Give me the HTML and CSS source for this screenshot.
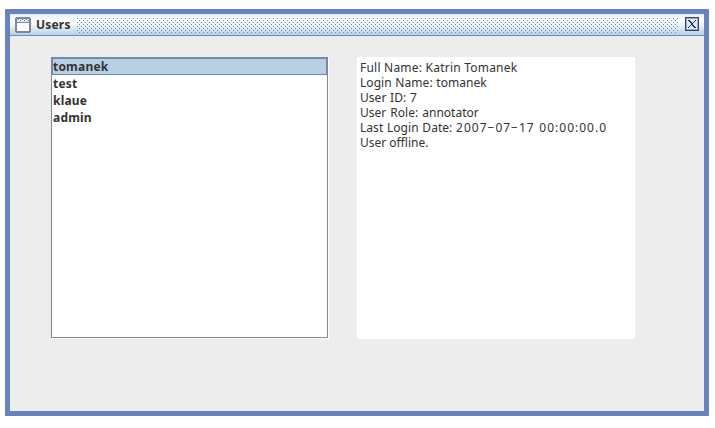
FILE: index.html
```html
<!DOCTYPE html>
<html lang="en">
<head>
<meta charset="utf-8">
<title>Users</title>
<link rel="stylesheet" href="styles.css">
</head>
<body>
<main class="window">
  <header class="titlebar">
    <svg class="icon" width="16" height="16" viewBox="0 0 16 16" shape-rendering="crispEdges">
      <rect x="1" y="1" width="14" height="14" fill="#fff"/>
      <path d="M1 0H15V1H16V15H15V16H1V15H0V1H1ZM2 2V14H14V2Z" fill="#7a8a99" fill-rule="evenodd"/>
      <rect x="2" y="2" width="12" height="3" fill="#dce8f4"/>
      <path d="M3 2h1v1h-1zM5 3h1v1h-1zM7 2h1v1h-1zM9 3h1v1h-1zM11 2h1v1h-1zM13 3h1v1h-1z" fill="#6382bf"/>
      <rect x="2" y="5" width="12" height="1" fill="#7a8a99"/>
    </svg>
    <h1 class="title">Users</h1>
    <div class="grip"></div>
    <svg class="close" width="14" height="14" viewBox="0 0 14 14" shape-rendering="crispEdges">
      <rect x=".5" y=".5" width="13" height="13" fill="#dbe7f4" stroke="#35405c"/>
      <rect x="1.5" y="1.5" width="11" height="11" fill="none" stroke="#9aabc4"/>
      <path d="M3 3h2v1h1v1h1v1h1v-1h1v-1h1v-1h1v1h-1v1h-1v1h-1v2h1v1h1v1h1v1h-2v-1h-1v-1h-1v-1h-1v1h-1v1h-1v1h-1v-1h1v-1h1v-1h1v-2h-1v-1h-1v-1h-1z" fill="#26304a"/>
    </svg>
  </header>
  <div class="content">
    <ul class="users">
      <li class="user selected">tomanek</li>
      <li class="user">test</li>
      <li class="user">klaue</li>
      <li class="user">admin</li>
    </ul>
    <div class="details">
      <p class="full">Full Name: Katrin Tomanek</p>
      <p class="login">Login Name: tomanek</p>
      <p class="login">User ID: 7</p>
      <p class="role">User Role: annotator</p>
      <p class="login">Last Login Date: <span class="stamp">2007−07−17 00:00:00.0</span></p>
      <p class="status">User offline.</p>
    </div>
  </div>
</main>
</body>
</html>
```
FILE: styles.css
```css
* { box-sizing: border-box; margin: 0; padding: 0; }
body { background: #fff; color: #333; font-family: "Noto Sans", "DejaVu Sans", sans-serif; }
.window {
  width: 704px; height: 407px; margin: 9px 0 0 5px;
  border: 5px solid #6782bd; border-radius: 1px; background: #ededed;
}
.titlebar {
  display: flex; align-items: flex-start; height: 22px; padding: 3px 5px 0;
  border-bottom: 1px solid #6f8bc0;
  background: linear-gradient(#e4edf6 0, #fff 6px, #fff 8px, #b8cfe5 100%);
}
.icon { flex: none; }
.title { flex: none; width: 46px; padding-left: 5px; font: bold 12px/16px "Noto Sans", sans-serif; letter-spacing: 0.2px; }
.grip {
  flex: none; width: 601px; height: 15px; margin: 1px 7px 0 0;
  background:
    conic-gradient(from 0deg at 1px 1px, transparent 75%, #6382bf 0) 0 0 / 4px 4px,
    conic-gradient(from 0deg at 1px 1px, transparent 75%, #6382bf 0) 2px 2px / 4px 4px;
}
.close { flex: none; }
.content { display: flex; gap: 28px; padding: 21px 0 0 41px; }
.users {
  width: 277px; height: 281px; margin-right: 1px; list-style: none;
  border: 1px solid #7a8a99; box-shadow: 1px 1px #fff; background: #fff;
}
.user { height: 17px; padding-left: 1px; font: bold 12px/17px "Noto Sans", sans-serif; letter-spacing: 0.2px; }
.selected { background: #b8cfe5; border: 1px solid #6f88b0; padding: 0; line-height: 16px; }
.details { width: 278px; height: 282px; padding: 3px; background: #fff; font-size: 12px; line-height: 15px; white-space: nowrap; }
.full { letter-spacing: 0.22px; }
.login { letter-spacing: 0.05px; word-spacing: 0.5px; }
.role { word-spacing: 1px; }
.stamp { letter-spacing: 1px; }
```
